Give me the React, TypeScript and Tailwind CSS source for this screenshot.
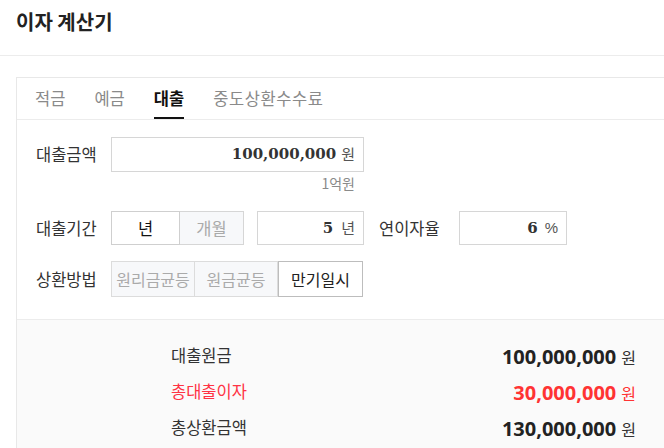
import React from "react";

const kr = "font-['Noto_Sans_CJK_KR',sans-serif]";

export default function App() {
  return (
    <div className={`w-[664px] h-[448px] overflow-hidden bg-white ${kr}`}>
      <div className="h-[56px] border-b border-[#ececec] pl-4 flex items-center">
        <h1 className="text-[20px] font-bold text-[#222] leading-none -mt-[12px]">이자 계산기</h1>
      </div>
      <div className="ml-4 mt-[21px] w-[700px] border border-[#e8e8e8]">
        {/* tabs */}
        <div className="h-[42px] border-b border-[#ececec] flex items-stretch pl-[18px] gap-[29px] text-[16.5px]">
          <div className="flex items-center text-[#8a8a8a]">적금</div>
          <div className="flex items-center text-[#8a8a8a]">예금</div>
          <div className="flex items-center text-[#111] font-bold relative">
            대출
            <div className="absolute left-0 right-0 bottom-0 h-[2px] bg-[#111]" />
          </div>
          <div className="flex items-center text-[#8a8a8a] tracking-[0.6px]">중도상환수수료</div>
        </div>
        {/* form */}
        <div className="pl-[19px] pt-[17px] pb-[22px] border-b border-[#ececec] text-[16.5px] text-[#333]">
          <div className="flex items-center h-[35px]">
            <div className="w-[75px]">대출금액</div>
            <div className="w-[253px] h-[35px] border border-[#d6d6d6] flex items-center justify-end pr-[8px]">
              <span className="font-['DejaVu_Serif',serif] font-bold text-[15px] text-[#333]">100,000,000</span>
              <span className="ml-[5px] text-[15px] text-[#555]">원</span>
            </div>
          </div>
          <div className="w-[328px] flex justify-end pr-[9px] mt-[1px] h-[20px] text-[14px] text-[#8a8a8a] leading-[20px]">1억원</div>
          <div className="flex items-center mt-[18px] h-[34px]">
            <div className="w-[75px]">대출기간</div>
            <div className="flex h-[34px]">
              <div className="w-[69px] border border-[#cfcfcf] bg-white flex items-center justify-center text-[#111]">년</div>
              <div className="w-[64px] border border-l-0 border-[#d6d6d6] bg-[#f7f8fa] flex items-center justify-center text-[#aaa]">개월</div>
            </div>
            <div className="ml-[13px] w-[107px] h-[34px] border border-[#d6d6d6] flex items-center justify-end pr-[8px]">
              <span className="font-['DejaVu_Serif',serif] font-bold text-[15px] text-[#333]">5</span>
              <span className="ml-[8px] text-[15px] text-[#555]">년</span>
            </div>
            <div className="ml-[15px] w-[80px]">연이자율</div>
            <div className="w-[108px] h-[34px] border border-[#d6d6d6] flex items-center justify-end pr-[8px]">
              <span className="font-['DejaVu_Serif',serif] font-bold text-[15px] text-[#333]">6</span>
              <span className="ml-[7px] text-[15px] text-[#555] font-['Liberation_Sans',sans-serif]">%</span>
            </div>
          </div>
          <div className="flex items-center mt-[16px] h-[36px]">
            <div className="w-[75px]">상환방법</div>
            <div className="flex h-[36px] text-[16px]">
              <div className="w-[84px] border border-[#dcdcdc] bg-[#f7f8fa] flex items-center justify-center text-[#aaa]">원리금균등</div>
              <div className="w-[83px] border border-l-0 border-[#dcdcdc] bg-[#f7f8fa] flex items-center justify-center text-[#aaa]">원금균등</div>
              <div className="w-[85px] border border-[#bdbdbd] bg-white flex items-center justify-center text-[#222]">만기일시</div>
            </div>
          </div>
        </div>
        {/* results */}
        <div className="bg-[#fafafa] h-[200px] pt-[25px] pl-[154px]">
          <div className="w-[465px] flex flex-col gap-[12px]">
            <div className="flex justify-between items-center h-[24px]">
              <span className="text-[16.5px] text-[#333] -mt-[3px]">대출원금</span>
              <span className="flex items-baseline">
                <span className="font-['Noto_Sans',sans-serif] font-bold text-[20px] text-[#222]">100,000,000</span>
                <span className="ml-[5px] text-[16px] text-[#333]">원</span>
              </span>
            </div>
            <div className="flex justify-between items-center h-[24px]">
              <span className="text-[16.5px] text-[#ff3344] -mt-[3px]">총대출이자</span>
              <span className="flex items-baseline">
                <span className="font-['Noto_Sans',sans-serif] font-bold text-[20px] text-[#ff3333]">30,000,000</span>
                <span className="ml-[5px] text-[16px] text-[#ff3333]">원</span>
              </span>
            </div>
            <div className="flex justify-between items-center h-[24px]">
              <span className="text-[16.5px] text-[#333] -mt-[3px]">총상환금액</span>
              <span className="flex items-baseline">
                <span className="font-['Noto_Sans',sans-serif] font-bold text-[20px] text-[#222]">130,000,000</span>
                <span className="ml-[5px] text-[16px] text-[#333]">원</span>
              </span>
            </div>
          </div>
        </div>
      </div>
    </div>
  );
}
